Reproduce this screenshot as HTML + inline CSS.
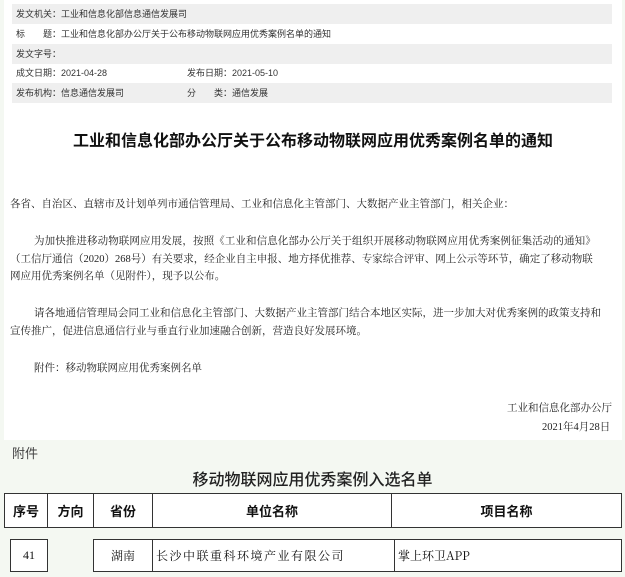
<!DOCTYPE html>
<html><head><meta charset="utf-8"><style>
body{margin:0;width:625px;height:577px;background:#f4f8f2;position:relative;overflow:hidden;font-family:"Liberation Sans","Noto Sans CJK SC",sans-serif;}
.page{position:absolute;left:4px;top:0;width:618px;height:440px;background:#fff;}
.row{position:absolute;left:8px;width:600px;height:20px;font-size:9px;color:#333;line-height:20px;}
.g{background:#efefef}
.t{position:absolute;font-family:"Liberation Serif","Noto Serif CJK SC",serif;font-size:10.5px;color:#222;white-space:nowrap}
.a{position:absolute;white-space:nowrap}
table{position:absolute;border-collapse:collapse;font-family:"Noto Sans CJK SC",sans-serif;color:#111}
td{border:1.3px solid #333;text-align:center;padding:0}
</style></head><body>
<div class="page">
<div class="row g" style="top:4px"><span style="padding-left:4px">发文机关：工业和信息化部信息通信发展司</span></div>
<div class="row" style="top:24px"><span style="padding-left:4px">标　　题：工业和信息化部办公厅关于公布移动物联网应用优秀案例名单的通知</span></div>
<div class="row g" style="top:44px"><span style="padding-left:4px">发文字号：</span></div>
<div class="row" style="top:63px"><span style="padding-left:4px">成文日期：2021-04-28</span><span style="position:absolute;left:175px">发布日期：2021-05-10</span></div>
<div class="row g" style="top:83px"><span style="padding-left:4px">发布机构：信息通信发展司</span><span style="position:absolute;left:175px">分　　类：通信发展</span></div>
<div class="a" style="left:0;width:618px;text-align:center;top:127px;font-size:16px;font-weight:bold;color:#111">工业和信息化部办公厅关于公布移动物联网应用优秀案例名单的通知</div>
<div class="t" style="left:6px;top:196px">各省、自治区、直辖市及计划单列市通信管理局、工业和信息化主管部门、大数据产业主管部门，相关企业：</div>
<div class="t" style="left:30px;top:233px;letter-spacing:0.1px">为加快推进移动物联网应用发展，按照《工业和信息化部办公厅关于组织开展移动物联网应用优秀案例征集活动的通知》</div>
<div class="t" style="left:6px;top:251px">（工信厅通信（2020）268号）有关要求，经企业自主申报、地方择优推荐、专家综合评审、网上公示等环节，确定了移动物联</div>
<div class="t" style="left:6px;top:268px">网应用优秀案例名单（见附件），现予以公布。</div>
<div class="t" style="left:30px;top:305px">请各地通信管理局会同工业和信息化主管部门、大数据产业主管部门结合本地区实际，进一步加大对优秀案例的政策支持和</div>
<div class="t" style="left:6px;top:323px">宣传推广，促进信息通信行业与垂直行业加速融合创新，营造良好发展环境。</div>
<div class="t" style="left:30px;top:360px">附件：移动物联网应用优秀案例名单</div>
<div class="t" style="left:503px;top:400px">工业和信息化部办公厅</div>
<div class="t" style="left:538px;top:419px">2021年4月28日</div>
</div>
<div class="a" style="left:12px;top:443px;font-size:13px;color:#444;font-family:'Noto Sans CJK SC',sans-serif">附件</div>
<div class="a" style="left:0;width:625px;text-align:center;top:466px;font-size:16px;color:#222;font-family:'Noto Sans CJK SC',sans-serif;font-weight:500">移动物联网应用优秀案例入选名单</div>
<table style="left:4px;top:493px;width:618px;height:35px;background:#fff;font-size:13px;font-weight:bold">
<tr><td style="width:42px">序号</td><td style="width:45px">方向</td><td style="width:58px">省份</td><td style="width:238px">单位名称</td><td>项目名称</td></tr></table>
<table style="left:10px;top:539px;width:38px;height:33px;background:#fff;font-size:12px;font-family:'Liberation Serif',serif"><tr><td>41</td></tr></table>
<table style="left:93px;top:539px;width:529px;height:33px;background:#fff;font-size:12px;font-family:'Noto Serif CJK SC',serif">
<tr><td style="width:58px">湖南</td><td style="width:238px;text-align:left;padding-left:3px;letter-spacing:1.5px">长沙中联重科环境产业有限公司</td><td style="text-align:left;padding-left:3px">掌上环卫APP</td></tr></table>
</body></html>
